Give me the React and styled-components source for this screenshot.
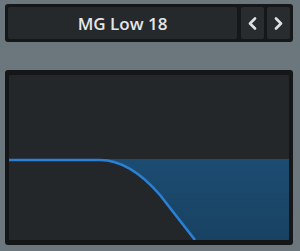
import styled, { createGlobalStyle } from "styled-components";

const GlobalStyle = createGlobalStyle`
  html, body {
    margin: 0;
    padding: 0;
    background: #6c767d;
    font-family: "Open Sans", "Liberation Sans", sans-serif;
  }
`;

const Page = styled.div`
  width: 288px;
  padding: 4px 0 0 5px;
  display: flex;
  flex-direction: column;
  gap: 28px;
`;

const PresetBar = styled.div`
  height: 32px;
  padding: 3px;
  background: #151719;
  border-radius: 3px;
  display: flex;
  gap: 3px;
`;

const PresetName = styled.div`
  flex: 1;
  background: #25292c;
  border-radius: 2px;
  display: flex;
  align-items: center;
  justify-content: center;
  color: #e4e6e7;
  font-size: 17px;
  font-weight: 600;
  margin-right: 1px;
  padding-top: 1px;
`;

const NavButton = styled.div`
  width: 23px;
  background: #282c2f;
  border-radius: 2px;
  display: flex;
  align-items: center;
  justify-content: center;
`;

const Graph = styled.div`
  height: 165px;
  padding: 5px 4px 5px 4px;
  background: #141618;
  border-radius: 3px;
`;

const Plot = styled.div`
  height: 100%;
  background: #23272a;
  border-radius: 1px;
  overflow: hidden;
  svg { display: block; }
`;

function Chevron({ dir }) {
  const d = dir === "left" ? "M7 1.5 L2 6.5 L7 11.5" : "M2 1.5 L7 6.5 L2 11.5";
  return (
    <svg width="9" height="13" viewBox="0 0 9 13">
      <path d={d} fill="none" stroke="#dfe1e2" strokeWidth="2.6" strokeLinecap="round" strokeLinejoin="round" />
    </svg>
  );
}

export default function App() {
  return (
    <>
      <GlobalStyle />
      <Page>
        <PresetBar>
          <PresetName>MG Low 18</PresetName>
          <NavButton><Chevron dir="left" /></NavButton>
          <NavButton><Chevron dir="right" /></NavButton>
        </PresetBar>
        <Graph>
          <Plot>
            <svg width="280" height="165" viewBox="0 0 280 165">
              <defs>
                <linearGradient id="cut" x1="0" y1="0" x2="0" y2="1">
                  <stop offset="0" stopColor="#1c4c71" />
                  <stop offset="1" stopColor="#184262" />
                </linearGradient>
              </defs>
              <path d="M91 84 L280 84 L280 165 L186 165 L151 120 C131 97 111 85 91 85 Z" fill="url(#cut)" />
              <path d="M0 85 L91 85 C111 85 131 97 151 120 L186 165" fill="none" stroke="#2b80d6" strokeWidth="2.6" />
            </svg>
          </Plot>
        </Graph>
      </Page>
    </>
  );
}
